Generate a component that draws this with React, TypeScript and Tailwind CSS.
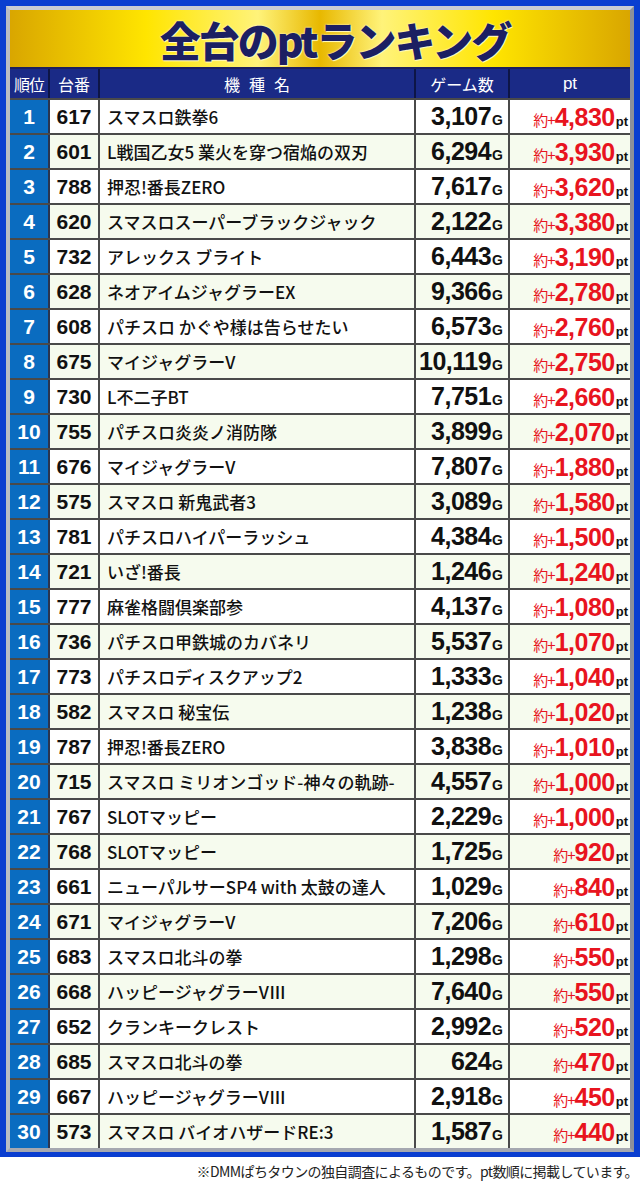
const rows: [number, string, string, string, string][] = [
  [1, "617", "スマスロ鉄拳6", "3,107", "4,830"],
  [2, "601", "L戦国乙女5 業火を穿つ宿焔の双刃", "6,294", "3,930"],
  [3, "788", "押忍!番長ZERO", "7,617", "3,620"],
  [4, "620", "スマスロスーパーブラックジャック", "2,122", "3,380"],
  [5, "732", "アレックス ブライト", "6,443", "3,190"],
  [6, "628", "ネオアイムジャグラーEX", "9,366", "2,780"],
  [7, "608", "パチスロ かぐや様は告らせたい", "6,573", "2,760"],
  [8, "675", "マイジャグラーV", "10,119", "2,750"],
  [9, "730", "L不二子BT", "7,751", "2,660"],
  [10, "755", "パチスロ炎炎ノ消防隊", "3,899", "2,070"],
  [11, "676", "マイジャグラーV", "7,807", "1,880"],
  [12, "575", "スマスロ 新鬼武者3", "3,089", "1,580"],
  [13, "781", "パチスロハイパーラッシュ", "4,384", "1,500"],
  [14, "721", "いざ!番長", "1,246", "1,240"],
  [15, "777", "麻雀格闘倶楽部参", "4,137", "1,080"],
  [16, "736", "パチスロ甲鉄城のカバネリ", "5,537", "1,070"],
  [17, "773", "パチスロディスクアップ2", "1,333", "1,040"],
  [18, "582", "スマスロ 秘宝伝", "1,238", "1,020"],
  [19, "787", "押忍!番長ZERO", "3,838", "1,010"],
  [20, "715", "スマスロ ミリオンゴッド-神々の軌跡-", "4,557", "1,000"],
  [21, "767", "SLOTマッピー", "2,229", "1,000"],
  [22, "768", "SLOTマッピー", "1,725", "920"],
  [23, "661", "ニューパルサーSP4 with 太鼓の達人", "1,029", "840"],
  [24, "671", "マイジャグラーV", "7,206", "610"],
  [25, "683", "スマスロ北斗の拳", "1,298", "550"],
  [26, "668", "ハッピージャグラーVⅢ", "7,640", "550"],
  [27, "652", "クランキークレスト", "2,992", "520"],
  [28, "685", "スマスロ北斗の拳", "624", "470"],
  [29, "667", "ハッピージャグラーVⅢ", "2,918", "450"],
  [30, "573", "スマスロ バイオハザードRE:3", "1,587", "440"],
];

const jp = "font-['Noto_Sans_CJK_JP',sans-serif]";
const num = "font-['Liberation_Sans','Noto_Sans_CJK_JP',sans-serif]";

export default function App() {
  return (
    <div className="w-[640px] h-[1190px] bg-white">
      {/* blue frame */}
      <div className="bg-[#0a3ed0] px-[6px] pt-[6px] pb-[5px]">
        <div className="border-[4px] border-t-[#c9ccd4] border-l-[#b9bcc4] border-r-[#8d9099] border-b-[#a5a8b0]">
          {/* title */}
          <div className="h-[59px] flex items-center justify-center bg-[linear-gradient(90deg,#d9a600_0%,#ffe500_22%,#fff37a_40%,#e8b800_50%,#fff37a_60%,#ffe500_78%,#d9a600_100%)] border-b-[2px] border-[#1c1f5e]">
            <h1
              className={`${jp} font-black text-[41px] leading-none tracking-[-2px] text-[#1c1f62] [text-shadow:0_0_2px_#ffffff,1px_1px_0_#fff6a0] pl-[30px] pt-[2px]`}
            >
              全台のptランキング
            </h1>
          </div>

          {/* header */}
          <div className={`${jp} grid grid-cols-[40px_50px_316px_94px_120px] h-[29px] bg-[#1a2a86] text-white text-[16px] leading-none`}>
            <div className="flex items-center justify-center border-r-[2px] border-[#0d1546] tracking-[-1px]">順位</div>
            <div className="flex items-center justify-center border-r-[2px] border-[#0d1546]">台番</div>
            <div className="flex items-center justify-center border-r-[2px] border-[#0d1546] tracking-[9px] pl-[9px]">機種名</div>
            <div className="flex items-center justify-center border-r-[2px] border-[#0d1546]">ゲーム数</div>
            <div className={`${num} flex items-center justify-center text-[17px]`}>pt</div>
          </div>

          {/* rows */}
          {rows.map(([rank, no, name, games, pt]) => (
            <div
              key={rank}
              className={`grid grid-cols-[40px_50px_316px_94px_120px] h-[35px] border-t-[2px] border-[#4a4a4a] ${
                rank % 2 === 0 ? "bg-[#f6fbee]" : "bg-white"
              }`}
            >
              <div className={`${num} bg-[#0a6cc0] text-white font-bold text-[21px] flex items-center justify-center border-r-[2px] border-[#2b3550]`}>
                {rank}
              </div>
              <div className={`${num} font-bold text-[21px] text-[#111] flex items-center justify-center border-r-[2px] border-[#4a4a4a]`}>
                {no}
              </div>
              <div className={`${jp} font-medium text-[17px] text-[#111] flex items-center pl-[7px] border-r-[2px] border-[#4a4a4a] whitespace-nowrap overflow-hidden`}>
                {name}
              </div>
              <div className={`${num} font-bold text-[#111] flex items-center justify-end pr-[5px] border-r-[2px] border-[#4a4a4a]`}>
                <span className="leading-none whitespace-nowrap">
                  <span className="text-[25px] tracking-[-0.5px]">{games}</span>
                  <span className="text-[14px] ml-[1px]">G</span>
                </span>
              </div>
              <div className="flex items-center justify-end pr-[2px]">
                <span className="leading-none whitespace-nowrap pt-[2px]">
                  <span className={`${jp} text-[15px] text-[#e8141e] tracking-[-1px]`}>約+</span>
                  <span className={`${num} font-bold text-[25px] text-[#e8141e] tracking-[-0.5px]`}>{pt}</span>
                  <span className={`${num} font-bold text-[13px] text-[#111] ml-[1px]`}>pt</span>
                </span>
              </div>
            </div>
          ))}
        </div>
      </div>

      {/* footnote */}
      <div className={`${jp} text-right text-[14px] text-[#222] pr-[2px] pt-[7px] leading-none tracking-[-0.6px]`}>
        ※DMMぱちタウンの独自調査によるものです。pt数順に掲載しています。
      </div>
    </div>
  );
}
